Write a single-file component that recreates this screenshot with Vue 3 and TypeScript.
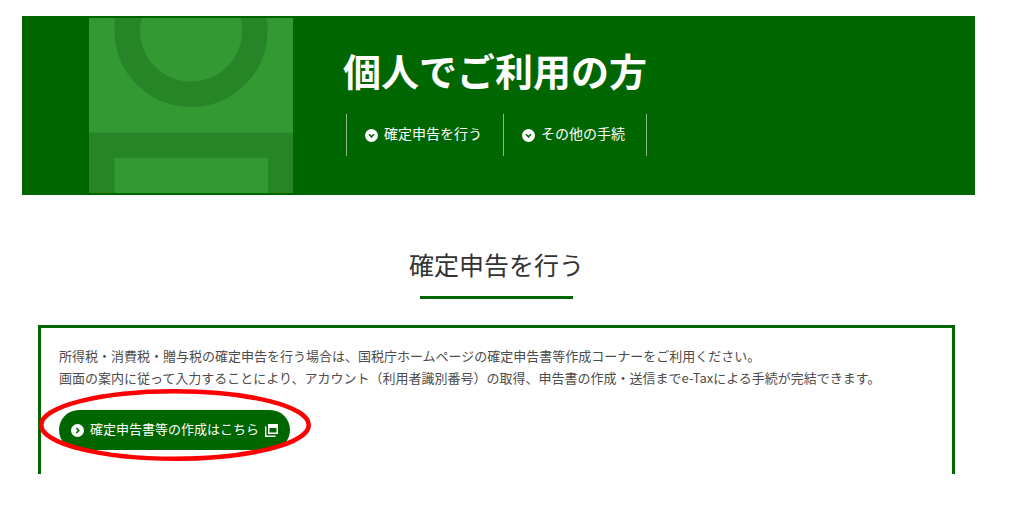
<script setup lang="ts">
interface NavItem {
  label: string
  href: string
}

const navItems: NavItem[] = [
  { label: '確定申告を行う', href: '#kakutei' },
  { label: 'その他の手続', href: '#other' },
]

const lines: string[] = [
  '所得税・消費税・贈与税の確定申告を行う場合は、国税庁ホームページの確定申告書等作成コーナーをご利用ください。',
  '画面の案内に従って入力することにより、アカウント（利用者識別番号）の取得、申告書の作成・送信までe-Taxによる手続が完結できます。',
]
</script>

<template>
  <main class="page">
    <header class="banner">
      <svg class="art" viewBox="0 0 204 175" aria-hidden="true">
        <rect width="204" height="175" fill="#339933" />
        <circle cx="102" cy="12.5" r="63.75" fill="none" stroke="#268526" stroke-width="25.5" />
        <path d="M0 114.5H204V175H179V140H25.500V175H0Z" fill="#268526" />
      </svg>
      <div class="intro">
        <h1 class="title">個人でご利用の方</h1>
        <nav class="nav">
          <a v-for="item in navItems" :key="item.href" class="nav-link" :href="item.href">
            <svg class="round-icon" viewBox="0 0 13 13" aria-hidden="true">
              <circle cx="6.500" cy="6.500" r="6.500" fill="#fff" />
              <path d="M4 5.300L6.500 7.800L9 5.300" fill="none" stroke="#006600" stroke-width="1.600" />
            </svg>
            <span class="nav-text">{{ item.label }}</span>
          </a>
        </nav>
      </div>
    </header>

    <section id="kakutei" class="section">
      <h2 class="heading">確定申告を行う</h2>
      <div class="panel">
        <p class="copy">
          <span v-for="line in lines" :key="line" class="line">{{ line }}</span>
        </p>
        <div class="action">
          <a class="button" href="#create">
            <svg class="round-icon" viewBox="0 0 13 13" aria-hidden="true">
              <circle cx="6.500" cy="6.500" r="6.500" fill="#fff" />
              <path d="M5.300 4L7.800 6.500L5.300 9" fill="none" stroke="#006600" stroke-width="1.600" />
            </svg>
            <span class="button-text">確定申告書等の作成はこちら</span>
            <svg class="window-icon" viewBox="0 0 13 13" aria-hidden="true">
              <path d="M3 0H13V10H3ZM4.500 4V8.500H11.500V4Z" fill="#fff" fill-rule="evenodd" />
              <path d="M0.700 2.500V12.300H10.500" fill="none" stroke="#fff" stroke-width="1.400" />
            </svg>
          </a>
          <svg class="marker" viewBox="0 0 272 72" aria-hidden="true">
            <ellipse cx="136" cy="36" rx="133.750" ry="33.750" fill="none" stroke="#ff0000" stroke-width="4.500" />
          </svg>
        </div>
      </div>
    </section>
  </main>
</template>

<style>
body {
  margin: 0;
  background: #fff;
}
</style>

<style scoped>
.page {
  padding: 16px 49px 0 22px;
  font-family: "Noto Sans CJK JP", sans-serif;
  color: #4c4c4c;
}

.banner {
  display: flex;
  padding: 2px 0 2px 67px;
  background: #006600;
  color: #fff;
}

.art {
  flex: none;
  width: 204px;
  height: 175px;
}

.intro {
  padding: 24px 0 0 50px;
}

.title {
  margin: 0;
  font-size: 38px;
  font-weight: 700;
  line-height: 56px;
  white-space: nowrap;
}

.nav {
  display: flex;
  margin: 16px 0 0 3px;
  border-left: 1px solid #8cb98c;
}

.nav-link {
  display: flex;
  gap: 6px;
  align-items: center;
  padding: 6px 21px 6px 18px;
  border-right: 1px solid #8cb98c;
  color: #fff;
  font-size: 14px;
  text-decoration: none;
  white-space: nowrap;
}

.nav-text {
  padding-bottom: 4px;
  line-height: 26px;
}

.round-icon {
  flex: none;
  width: 13px;
  height: 13px;
}

.section {
  padding: 49px 20px 0 16px;
}

.heading {
  display: flex;
  flex-direction: column;
  align-items: center;
  margin: 0;
  color: #333;
  font-size: 25px;
  font-weight: 400;
  line-height: 40px;
}

.heading::after {
  content: "";
  width: 153px;
  height: 3px;
  margin-top: 12px;
  background: #006600;
}

.panel {
  margin-top: 26px;
  padding: 17px 18px 24px;
  border: 3px solid #006600;
  border-bottom: 0;
}

.copy {
  margin: 0;
  font-size: 13px;
  line-height: 22px;
}

.line {
  display: block;
}

.action {
  position: relative;
  display: flex;
  margin-top: 21px;
}

.button {
  display: flex;
  gap: 6px;
  align-items: center;
  padding: 0 12px;
  border-radius: 20px;
  background: #006600;
  color: #fff;
  font-size: 13px;
  text-decoration: none;
  white-space: nowrap;
}

.button-text {
  padding-bottom: 2px;
  line-height: 38px;
}

.window-icon {
  flex: none;
  width: 13px;
  height: 13px;
}

.marker {
  position: absolute;
  top: -21px;
  left: -20px;
  width: 272px;
  height: 72px;
  pointer-events: none;
}
</style>
